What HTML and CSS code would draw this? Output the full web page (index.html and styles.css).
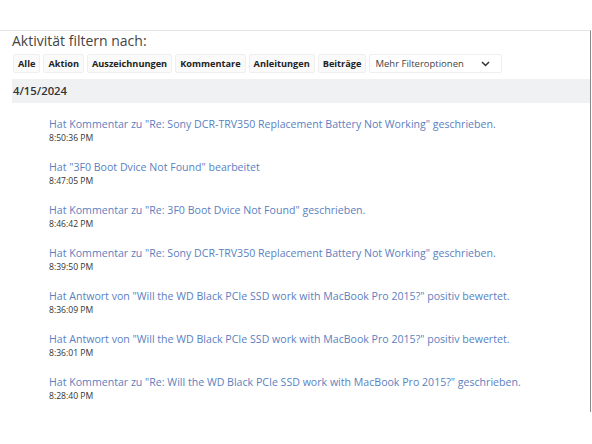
FILE: index.html
```html
<!DOCTYPE html>
<html lang="de">
<head>
<meta charset="utf-8">
<title>Aktivität</title>
<link rel="stylesheet" href="styles.css">
</head>
<body>
<div class="panel">
  <h2 class="title">Aktivität filtern nach:</h2>
  <div class="filters">
    <button class="btn">Alle</button>
    <button class="btn">Aktion</button>
    <button class="btn">Auszeichnungen</button>
    <button class="btn">Kommentare</button>
    <button class="btn">Anleitungen</button>
    <button class="btn">Beiträge</button>
    <div class="select">
      <span>Mehr Filteroptionen</span>
      <svg class="chev" width="9" height="6" viewBox="0 0 9 6"><path d="M1 1l3.5 3.5L8 1" fill="none" stroke="#333" stroke-width="1.5"/></svg>
    </div>
  </div>
  <div class="date">4/15/2024</div>
  <ul class="list">
    <li class="item"><a class="link" href="#">Hat Kommentar zu "Re: Sony DCR-TRV350 Replacement Battery Not Working" geschrieben.</a><span class="time">8:50:36 PM</span></li>
    <li class="item"><a class="link" href="#">Hat "3F0 Boot Dvice Not Found" bearbeitet</a><span class="time">8:47:05 PM</span></li>
    <li class="item"><a class="link" href="#">Hat Kommentar zu "Re: 3F0 Boot Dvice Not Found" geschrieben.</a><span class="time">8:46:42 PM</span></li>
    <li class="item"><a class="link" href="#">Hat Kommentar zu "Re: Sony DCR-TRV350 Replacement Battery Not Working" geschrieben.</a><span class="time">8:39:50 PM</span></li>
    <li class="item"><a class="link" href="#">Hat Antwort von "Will the WD Black PCIe SSD work with MacBook Pro 2015?" positiv bewertet.</a><span class="time">8:36:09 PM</span></li>
    <li class="item"><a class="link" href="#">Hat Antwort von "Will the WD Black PCIe SSD work with MacBook Pro 2015?" positiv bewertet.</a><span class="time">8:36:01 PM</span></li>
    <li class="item"><a class="link" href="#">Hat Kommentar zu "Re: Will the WD Black PCIe SSD work with MacBook Pro 2015?" geschrieben.</a><span class="time">8:28:40 PM</span></li>
  </ul>
</div>
</body>
</html>
```

FILE: styles.css
```css
html, body {
  margin: 0;
  padding: 0;
  background: #fff;
}
body {
  font-family: "Open Sans", "Noto Sans", sans-serif;
  color: #222;
}
.panel {
  width: 591px;
  height: 382px;
  margin-top: 30px;
  border-top: 1px solid #e2e2e2;
  border-right: 1px solid #8a8a8a;
  padding-left: 12px;
  box-sizing: border-box;
  box-shadow: 0 1px 2px rgba(0,0,0,0.04);
}
.title {
  margin: 0;
  font-size: 14px;
  font-weight: 400;
  line-height: 20px;
  color: #444;
}
.filters {
  display: flex;
  align-items: center;
  gap: 3px;
  margin-top: 3px;
  padding-left: 1px;
}
.btn {
  font-family: inherit;
  font-size: 9.2px;
  font-weight: 700;
  color: #222;
  background: #fafafa;
  border: 1px solid #efefef;
  border-radius: 2px;
  height: 19px;
  padding: 0 4px;
  line-height: 17px;
  cursor: pointer;
}
.select {
  display: flex;
  align-items: center;
  justify-content: space-between;
  width: 133px;
  height: 19px;
  box-sizing: border-box;
  padding: 0 11px 0 5px;
  border: 1px solid #efefef;
  border-radius: 2px;
  font-size: 9.5px;
  color: #444;
  background: #fff;
}
.date {
  margin-top: 6px;
  height: 24px;
  line-height: 24px;
  background: #f0f1f3;
  font-size: 11.3px;
  font-weight: 600;
  color: #333;
  padding-left: 1px;
}
.list {
  list-style: none;
  margin: 0;
  padding: 14px 0 0 37px;
}
.item {
  display: flex;
  flex-direction: column;
  margin-bottom: 15px;
}
.link {
  font-size: 10.6px;
  line-height: 14px;
  color: #5b7fc0;
  text-decoration: none;
  white-space: nowrap;
}
.time {
  font-size: 8.6px;
  line-height: 14px;
  color: #333;
}
```
